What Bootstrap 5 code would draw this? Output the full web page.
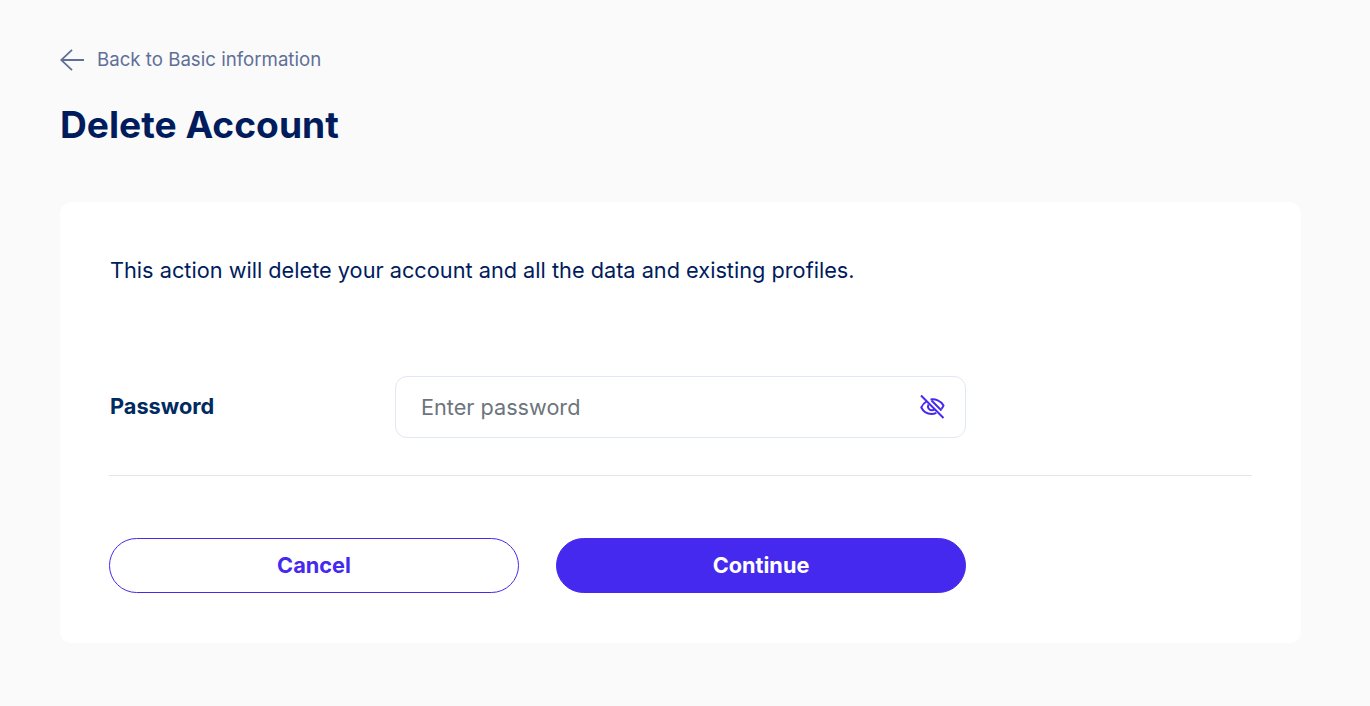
<!DOCTYPE html>
<html lang="en">
<head>
<meta charset="utf-8">
<title>Delete Account</title>
<link href="https://cdn.jsdelivr.net/npm/bootstrap@5.3.0/dist/css/bootstrap.min.css" rel="stylesheet">
<style>
html, body { height: 100%; }
body { background: #fafafa; font-family: Inter, "Liberation Sans", sans-serif; color: #001c5c; overflow: hidden; }
.page-wrap { padding: 47px 69px 0 60px; }
.back-row { height: 25px; color: #5f6f98; font-size: 18.67px; line-height: 25px; gap: 13px; text-decoration: none; }
.back-row svg { width: 24px; height: 22px; flex: none; }
.page-title { font-size: 37.2px; font-weight: 700; line-height: 44px; color: #001c5c; padding-top: 1px; margin: 30px 0 55px; }
.panel { background: #fff; border-radius: 12px; padding: 50px 49px 50px 49px; height: 441px; }
.intro { font-size: 21.73px; line-height: 36px; margin: 0 0 88px 1px; color: #001c5c; }
.field-label { width: 286px; font-size: 21.73px; font-weight: 700; color: #002a60; margin: 0 0 2px 1px; flex: none; }
.pw-box { width: 571px; height: 62px; margin-left: -1px; }
.pw-box .form-control { height: 62px; border: 1px solid #e0e8f2; border-radius: 12px; font-size: 21.67px; padding: 0 60px 0 25px; color: #001c5c; }
.pw-box .form-control::placeholder { color: #6c757d; opacity: 1; }
.eye-btn { top: 17px; right: 21px; width: 26px; height: 26px; background: none; border: 0; padding: 0; line-height: 0; }
.rule-line { border: 0; border-top: 1px solid #e0e8ee; opacity: 1; margin: 37px 0 62px; }
.btn-row { gap: 37px; }
.pill { width: 410px; height: 55px; border-radius: 28px; font-size: 21.73px; font-weight: 700; padding: 0; line-height: 53px; }
.pill-out { background: #fff; border: 1px solid #4629ee; color: #4629ee; }
.pill-out:hover { background: #fff; color: #4629ee; border-color: #4629ee; }
.pill-fill { background: #4629ee; border: 1px solid #4629ee; color: #fff; }
.pill-fill:hover { background: #4629ee; color: #fff; border-color: #4629ee; }
</style>
</head>
<body>
<main class="page-wrap">
  <a href="#" class="back-row d-flex align-items-center">
    <svg viewBox="0 0 24 22" fill="none" stroke="#5f6f98" stroke-width="1.8" aria-hidden="true"><path d="M24 11H1.500M12 .8 1.200 11 12 21.200"/></svg>
    <span>Back to Basic information</span>
  </a>
  <h1 class="page-title">Delete Account</h1>
  <section class="panel">
    <p class="intro">This action will delete your account and all the data and existing profiles.</p>
    <div class="d-flex align-items-center">
      <label class="field-label" for="pw">Password</label>
      <div class="pw-box position-relative">
        <input id="pw" type="password" class="form-control shadow-none" placeholder="Enter password">
        <button type="button" class="eye-btn position-absolute" aria-label="Show password">
          <svg viewBox="0 0 26 26" width="26" height="26" fill="none" stroke="#4629ee" stroke-width="2" aria-hidden="true"><path d="M7.500 8.500C5.200 9.800 3.500 11.600 2.300 14.500c2 4 5.700 6.500 10.200 6.500 1.800 0 3.400-.4 4.800-1.100M11.500 6.500C16 5.700 22 7.500 24.500 12.500c-.5 1.300-1.200 2.400-2 3.300"/><path d="M9.500 11.500c-1.500 3 .5 5.700 3.500 5.700 1 0 1.800-.3 2.400-.8"/><path d="M2 2.500 24.500 25M12.500 7.500 22.500 17.500"/></svg>
        </button>
      </div>
    </div>
    <hr class="rule-line">
    <div class="btn-row d-flex">
      <button type="button" class="btn pill pill-out">Cancel</button>
      <button type="button" class="btn pill pill-fill">Continue</button>
    </div>
  </section>
</main>
<script src="https://cdn.jsdelivr.net/npm/bootstrap@5.3.0/dist/js/bootstrap.bundle.min.js"></script>
</body>
</html>
